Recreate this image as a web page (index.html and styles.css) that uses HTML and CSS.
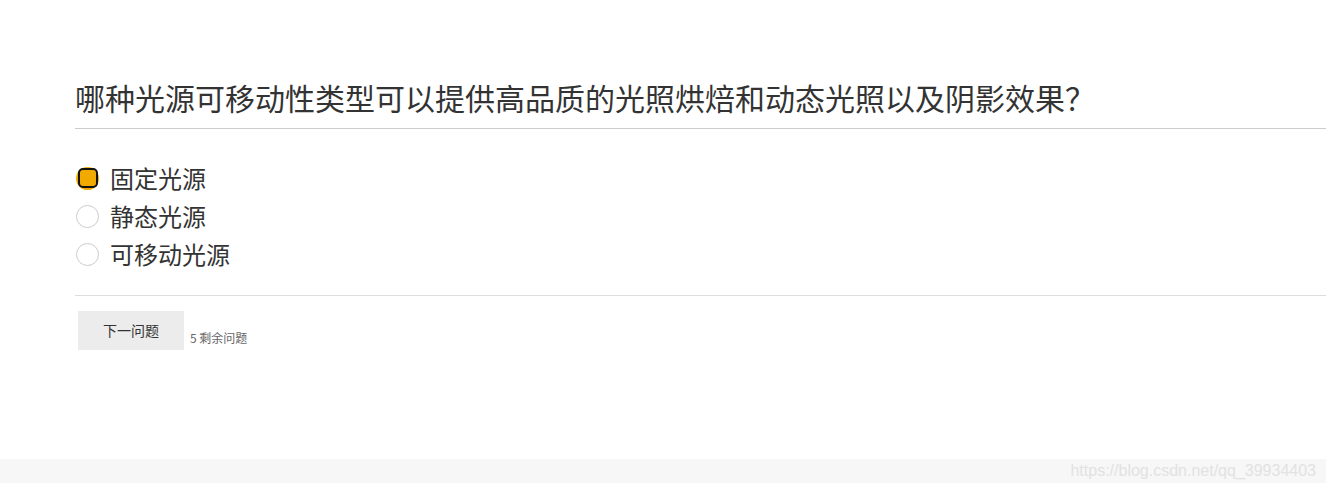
FILE: index.html
```html
<!DOCTYPE html>
<html lang="zh">
<head>
<meta charset="utf-8">
<link rel="stylesheet" href="styles.css">
</head>
<body>
<div class="page">
  <div class="quiz">
    <h1 class="question">哪种光源可移动性类型可以提供高品质的光照烘焙和动态光照以及阴影效果？</h1>
    <ul class="options">
      <li class="option"><span class="radio selected"><span class="dot"></span></span><span class="label">固定光源</span></li>
      <li class="option"><span class="radio"></span><span class="label">静态光源</span></li>
      <li class="option"><span class="radio"></span><span class="label">可移动光源</span></li>
    </ul>
    <div class="actions">
      <button class="next">下一问题</button>
      <span class="remaining">5 剩余问题</span>
    </div>
  </div>
  <div class="footer">
    <span class="watermark">https://blog.csdn.net/qq_39934403</span>
  </div>
</div>
</body>
</html>
```
FILE: styles.css
```css
html, body {
  margin: 0;
  padding: 0;
  background: #fff;
}
body {
  font-family: "Noto Sans CJK SC", "Noto Sans", sans-serif;
  color: #333;
}
.page {
  height: 483px;
  display: flex;
  flex-direction: column;
}
.quiz {
  flex: 1;
  padding: 73px 0 0 75px;
}
.question {
  margin: 0;
  font-size: 30px;
  font-weight: normal;
  line-height: 48px;
  color: #333;
  padding-bottom: 7px;
  border-bottom: 1px solid #ccc;
  letter-spacing: 0;
}
.options {
  list-style: none;
  margin: 0;
  padding: 30px 0 22px 0;
  border-bottom: 1px solid #ddd;
}
.option {
  display: flex;
  align-items: center;
  height: 38px;
}
.radio {
  box-sizing: border-box;
  width: 23px;
  height: 23px;
  border: 1px solid #ccc;
  border-radius: 50%;
  margin: 0 11px 0 1px;
  flex: none;
  display: flex;
  align-items: center;
  justify-content: center;
  position: relative;
}
.radio.selected {
  border: none;
  background: #f2aa00;
}
.radio.selected .dot {
  position: absolute;
  left: 1.5px;
  top: 1.5px;
  width: 20px;
  height: 20px;
  box-sizing: border-box;
  border: 2px solid #111;
  border-radius: 5px;
}
.label {
  font-size: 24px;
  line-height: 38px;
  color: #333;
}
.actions {
  display: flex;
  align-items: flex-end;
  padding: 15px 0 0 3px;
}
.next {
  width: 106px;
  height: 39px;
  border: none;
  background: #ececec;
  font-family: "Noto Sans CJK SC", sans-serif;
  font-size: 14px;
  color: #333;
  padding: 0 0 2px 0;
}
.remaining {
  font-size: 12px;
  color: #666;
  margin-left: 6px;
  line-height: 14px;
  margin-bottom: 5px;
}
.footer {
  height: 24px;
  background: #f7f7f7;
  display: flex;
  justify-content: flex-end;
  align-items: center;
  padding-right: 10px;
}
.watermark {
  font-family: "Liberation Sans", Arial, sans-serif;
  font-size: 16px;
  color: #e2e2e2;
}
```
